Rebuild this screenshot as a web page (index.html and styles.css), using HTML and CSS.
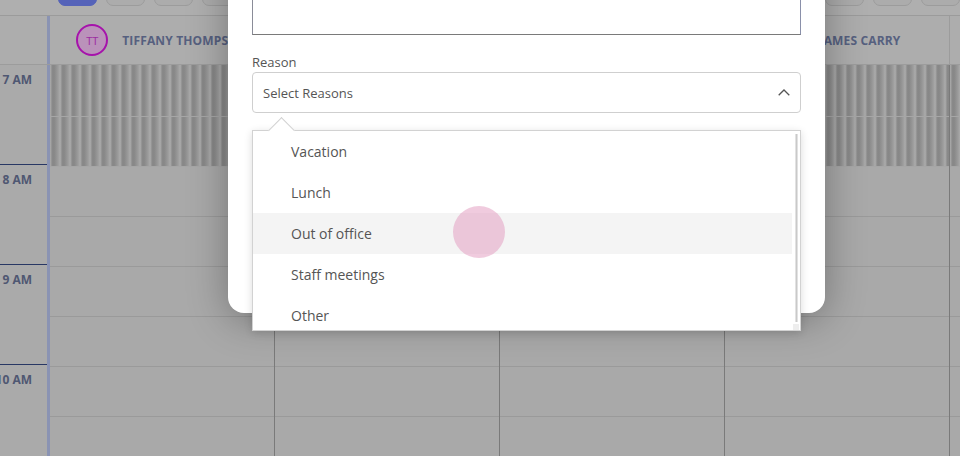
FILE: index.html
```html
<!DOCTYPE html>
<html lang="en">
<head>
<meta charset="utf-8">
<title>Scheduler – Block time</title>
<link rel="stylesheet" href="styles.css">
</head>
<body>
<div class="scheduler">
  <div class="toolbar">
    <div class="toolbar-corner"></div>
    <div class="view-group">
      <span class="view-btn active"></span>
      <span class="view-btn"></span>
      <span class="view-btn"></span>
      <span class="view-btn"></span>
    </div>
    <div class="view-group end">
      <span class="view-btn"></span>
      <span class="view-btn"></span>
      <span class="view-btn"></span>
    </div>
  </div>

  <div class="staff-row">
    <div class="time-head"></div>
    <div class="staff"><span class="avatar">TT</span><span class="staff-name">TIFFANY THOMPSON</span></div>
    <div class="staff"><span class="avatar">MB</span><span class="staff-name">MARIA BROWN</span></div>
    <div class="staff"><span class="avatar">DL</span><span class="staff-name">DAVID LEE</span></div>
    <div class="staff"><span class="avatar">JC</span><span class="staff-name">JAMES CARRY</span></div>
    <div class="staff"></div>
  </div>

  <div class="grid">
    <div class="time-col">
      <div class="hour"><span>7 AM</span></div>
      <div class="hour"><span>8 AM</span></div>
      <div class="hour"><span>9 AM</span></div>
      <div class="hour"><span>10 AM</span></div>
    </div>
    <div class="day-col">
      <div class="slot blocked"></div><div class="slot blocked"></div>
      <div class="slot"></div><div class="slot"></div><div class="slot"></div><div class="slot"></div><div class="slot"></div><div class="slot"></div>
    </div>
    <div class="day-col">
      <div class="slot blocked"></div><div class="slot blocked"></div>
      <div class="slot"></div><div class="slot"></div><div class="slot"></div><div class="slot"></div><div class="slot"></div><div class="slot"></div>
    </div>
    <div class="day-col">
      <div class="slot blocked"></div><div class="slot blocked"></div>
      <div class="slot"></div><div class="slot"></div><div class="slot"></div><div class="slot"></div><div class="slot"></div><div class="slot"></div>
    </div>
    <div class="day-col">
      <div class="slot blocked"></div><div class="slot blocked"></div>
      <div class="slot"></div><div class="slot"></div><div class="slot"></div><div class="slot"></div><div class="slot"></div><div class="slot"></div>
    </div>
    <div class="day-col">
      <div class="slot blocked"></div><div class="slot blocked"></div>
      <div class="slot"></div><div class="slot"></div><div class="slot"></div><div class="slot"></div><div class="slot"></div><div class="slot"></div>
    </div>
  </div>
</div>

<div class="modal">
  <textarea class="notes"></textarea>
  <label class="field-label">Reason</label>
  <div class="select-wrap">
    <div class="select">
      <span>Select Reasons</span>
      <svg class="chevron" width="12" height="7" viewBox="0 0 12 7"><polyline points="0.7,6.3 6,1 11.3,6.3" fill="none" stroke="#555" stroke-width="1.3"/></svg>
    </div>
    <div class="dropdown">
      <ul class="options">
        <li>Vacation</li>
        <li>Lunch</li>
        <li class="hover">Out of office</li>
        <li>Staff meetings</li>
        <li>Other</li>
      </ul>
      <div class="scroll-track">
        <div class="scroll-thumb"></div>
        <div class="scroll-corner"></div>
      </div>
    </div>
  </div>
  <div class="modal-rest">
    <button class="btn">Cancel</button>
    <button class="btn primary">Save</button>
  </div>
</div>

<div class="touch"></div>
</body>
</html>
```

FILE: styles.css
```css
* { box-sizing: border-box; }
html, body { margin: 0; padding: 0; }
body {
  width: 960px;
  height: 456px;
  overflow: hidden;
  position: relative;
  background: #a9a9a9;
  font-family: "Open Sans", "Noto Sans", sans-serif;
}

/* ---------- scheduler (dimmed behind modal) ---------- */
.scheduler { width: 960px; }

.toolbar {
  height: 16px;
  display: flex;
  background: #afafaf;
  border-bottom: 1px solid #9b9b9b;
}
.toolbar-corner { width: 50px; flex: none; }
.view-group { display: flex; gap: 9px; padding-left: 8px; }
.view-group.end { margin-left: auto; padding-left: 0; }
.view-btn {
  width: 39px;
  height: 20px;
  margin-top: -14px;
  border-radius: 7px;
  background: #acacac;
  border: 1px solid #9c9c9c;
}
.view-btn.active { background: #5563b9; border-color: #5563b9; }

.staff-row {
  height: 49px;
  display: grid;
  grid-template-columns: 50px repeat(5, 225px);
  background: #adadad;
  border-bottom: 1px solid #9c9c9c;
}
.time-head { border-right: 3px solid #8a93b3; }
.staff {
  display: flex;
  align-items: center;
  justify-content: center;
  gap: 14px;
  border-right: 1px solid #9c9c9c;
  white-space: nowrap;
  overflow: hidden;
}
.avatar {
  flex: none;
  width: 32px;
  height: 32px;
  border-radius: 50%;
  border: 2px solid #a612ab;
  background: #ba92ba;
  color: #9c2da1;
  font-size: 11px;
  display: flex;
  align-items: center;
  justify-content: center;
}
.staff-name {
  font-size: 12px;
  font-weight: 700;
  color: #56607f;
  letter-spacing: 0.15px;
}

.grid {
  display: grid;
  grid-template-columns: 50px repeat(5, 225px);
  height: 391px;
  overflow: hidden;
}
.time-col {
  border-right: 3px solid #8a93b3;
  background: #aaaaaa;
}
.hour {
  height: 100px;
  border-bottom: 1px solid #283764;
  display: flex;
  justify-content: flex-end;
  padding: 7px 15px 0 0;
}
.hour span {
  flex: none;
  font-size: 12px;
  font-weight: 700;
  color: #4f5772;
  line-height: 16px;
  white-space: nowrap;
}
.day-col {
  border-right: 1px solid #7a7a7a;
  padding-top: 2px;
  background: #a9a9a9;
}
.slot {
  height: 50px;
  border-bottom: 1px solid #9a9a9a;
}
.slot.blocked {
  background: repeating-linear-gradient(90deg,
    #ababab 0px, #a0a0a0 1px, #8a8a8a 2px, #878787 4px, #969696 7px, #a2a2a2 9px, #ababab 10px);
  border-bottom-color: #a6a6a6;
}
.slot.blocked:first-child { margin-top: -2px; height: 52px; }

/* ---------- modal ---------- */
.modal {
  position: absolute;
  left: 228px;
  top: -60px;
  width: 597px;
  background: #fff;
  border-radius: 16px;
  padding: 15px 24px 24px;
  box-shadow: 0 6px 40px rgba(0, 0, 0, 0.32);
}
.notes {
  display: block;
  width: 100%;
  height: 80px;
  border: 1px solid #8a8c98;
  border-bottom-color: #7a7a7a;
  border-right-color: #8a90aa;
  resize: none;
  margin: 0;
}
.field-label {
  display: block;
  margin-top: 17px;
  font-size: 13px;
  line-height: 20px;
  color: #555;
}
.select-wrap { position: relative; }
.select {
  height: 41px;
  border: 1px solid #cfcfcf;
  border-radius: 4px;
  padding: 0 10px;
  display: flex;
  align-items: center;
  justify-content: space-between;
  font-size: 13px;
  color: #555;
}
.chevron { display: block; margin-top: -1px; }

.dropdown {
  position: absolute;
  left: 0;
  right: 0;
  top: calc(100% + 17px);
  height: 201px;
  display: flex;
  background: #fff;
  border: 1px solid #d2d2d2;
  box-shadow: 0 2px 8px rgba(0, 0, 0, 0.14);
  z-index: 2;
}
.dropdown::before {
  content: "";
  position: absolute;
  left: 19px;
  top: -10px;
  width: 18px;
  height: 18px;
  background: #fff;
  border-left: 1px solid #d2d2d2;
  border-top: 1px solid #d2d2d2;
  transform: rotate(45deg);
}
.options {
  position: relative;
  flex: 1;
  list-style: none;
  margin: 0;
  padding: 0;
  height: 199px;
  overflow: hidden;
}
.options li {
  height: 41px;
  line-height: 41px;
  padding-left: 38px;
  font-size: 14px;
  color: #555;
}
.options li.hover { background: #f4f4f4; }

.scroll-track {
  flex: none;
  width: 8px;
  display: flex;
  flex-direction: column;
  align-items: center;
  padding-top: 3px;
}
.scroll-thumb {
  width: 3px;
  height: 188px;
  background: #c9c9c9;
  border-left: 1px solid #e2e2e2;
  border-right: 1px solid #e2e2e2;
}
.scroll-corner {
  margin-top: auto;
  width: 6px;
  height: 6px;
  background: #eeeeee;
}

.modal-rest {
  height: 176px;
  display: flex;
  justify-content: flex-end;
  align-items: flex-end;
  gap: 10px;
}
.btn {
  font-family: inherit;
  font-size: 13px;
  padding: 8px 18px;
  border: 1px solid #ccc;
  border-radius: 6px;
  background: #fff;
  color: #555;
}
.btn.primary { background: #5563b9; border-color: #5563b9; color: #fff; }

/* touch indicator */
.touch {
  position: absolute;
  left: 453px;
  top: 206px;
  width: 52px;
  height: 52px;
  border-radius: 50%;
  background: rgba(226, 152, 190, 0.5);
  z-index: 5;
}
```
